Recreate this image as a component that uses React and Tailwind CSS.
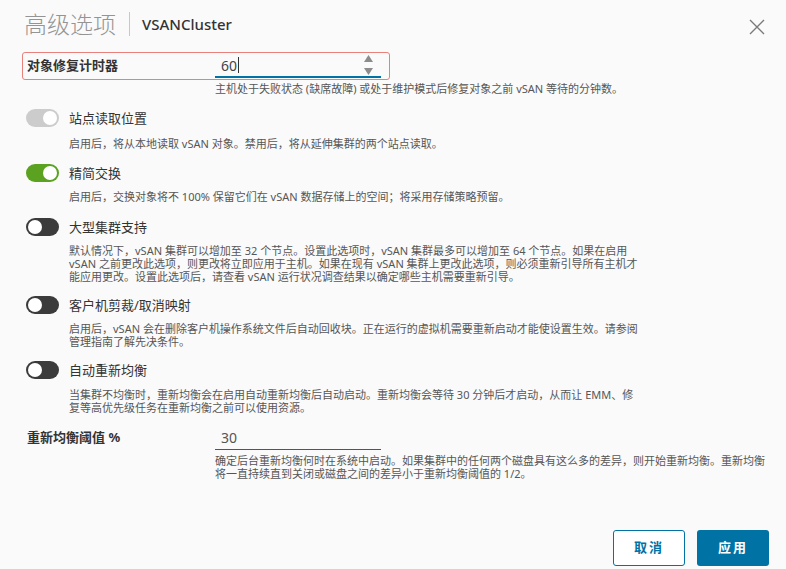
import React from "react";

const font = { fontFamily: '"Noto Sans", "Noto Sans CJK SC", sans-serif' };

function Toggle({ state }) {
  // state: "on" | "off" | "disabled"
  if (state === "on") {
    return (
      <div className="relative h-[18px] w-[33px] shrink-0 rounded-full bg-[#5aa220]">
        <div className="absolute right-[2px] top-[2px] h-[14px] w-[14px] rounded-full bg-white" />
      </div>
    );
  }
  if (state === "disabled") {
    return (
      <div className="relative h-[18px] w-[33px] shrink-0 rounded-full bg-[#cccccc]">
        <div className="absolute right-[2px] top-[2px] h-[14px] w-[14px] rounded-full bg-white" />
      </div>
    );
  }
  return (
    <div className="relative h-[18px] w-[33px] shrink-0 rounded-full bg-[#3b3b3b]">
      <div className="absolute left-[2px] top-[2px] h-[14px] w-[14px] rounded-full bg-white" />
    </div>
  );
}

function Row({ state, label, lines, rowTop, descTop }) {
  return (
    <div style={{ marginTop: rowTop }}>
      <div className="flex h-[18px] items-center pl-[26px]">
        <Toggle state={state} />
        <span className="ml-[10px] text-[13px] leading-[18px] text-[#333]">{label}</span>
      </div>
      <div
        className="pl-[69px] text-[11px] leading-[13px] text-[#565656]"
        style={{ marginTop: descTop }}
      >
        {lines.map((l, i) => (
          <div key={i} className="whitespace-nowrap">
            {l}
          </div>
        ))}
      </div>
    </div>
  );
}

export default function App() {
  return (
    <div className="h-[569px] w-[786px] overflow-hidden bg-[#fafafa]" style={font}>
      {/* header */}
      <div className="flex h-[48px] items-center pl-[24px] pr-[20px]">
        <span className="text-[23px] font-light leading-none text-[#949494]">高级选项</span>
        <div className="ml-[13px] h-[24px] w-px bg-[#c8c8c8]" />
        <span className="ml-[12px] text-[15px] font-medium text-[#333]">VSANCluster</span>
        <button className="ml-auto mt-[6px] flex h-[18px] w-[18px] items-center justify-center">
          <svg width="16" height="16" viewBox="0 0 16 16">
            <path d="M1 1 L15 15 M15 1 L1 15" stroke="#7a7a7a" strokeWidth="1.4" fill="none" />
          </svg>
        </button>
      </div>

      {/* repair timer */}
      <div className="ml-[22px] mt-[4px] flex h-[28px] w-[368px] items-center rounded-[3px] border border-[#e8807c]">
        <span className="ml-[4px] w-[188px] text-[13px] font-bold text-[#333]">对象修复计时器</span>
        <div className="relative flex h-[24px] w-[166px] items-center border-b-2 border-[#0072a3] pl-[6px]">
          <span className="text-[14px] text-[#444]">60</span>
          <span className="ml-px h-[16px] w-px bg-[#333]" />
          <div className="absolute right-[8px] top-[1px] flex flex-col items-center gap-[6px]">
            <svg width="9" height="7" viewBox="0 0 9 7">
              <path d="M4.5 0 L9 7 L0 7 Z" fill="#8c8c8c" />
            </svg>
            <svg width="9" height="7" viewBox="0 0 9 7">
              <path d="M0 0 L9 0 L4.5 7 Z" fill="#8c8c8c" />
            </svg>
          </div>
        </div>
      </div>
      <div className="ml-[215px] mt-[2px] whitespace-nowrap text-[11px] leading-[13px] text-[#565656]">
        主机处于失败状态 (缺席故障) 或处于维护模式后修复对象之前 vSAN 等待的分钟数。
      </div>

      <Row
        state="disabled"
        label="站点读取位置"
        rowTop={14}
        descTop={10}
        lines={["启用后，将从本地读取 vSAN 对象。禁用后，将从延伸集群的两个站点读取。"]}
      />
      <Row
        state="on"
        label="精简交换"
        rowTop={14}
        descTop={8}
        lines={["启用后，交换对象将不 100% 保留它们在 vSAN 数据存储上的空间；将采用存储策略预留。"]}
      />
      <Row
        state="off"
        label="大型集群支持"
        rowTop={15}
        descTop={8}
        lines={[
          "默认情况下，vSAN 集群可以增加至 32 个节点。设置此选项时，vSAN 集群最多可以增加至 64 个节点。如果在启用",
          "vSAN 之前更改此选项，则更改将立即应用于主机。如果在现有 vSAN 集群上更改此选项，则必须重新引导所有主机才",
          "能应用更改。设置此选项后，请查看 vSAN 运行状况调查结果以确定哪些主机需要重新引导。",
        ]}
      />
      <Row
        state="off"
        label="客户机剪裁/取消映射"
        rowTop={13}
        descTop={8}
        lines={[
          "启用后，vSAN 会在删除客户机操作系统文件后自动回收块。正在运行的虚拟机需要重新启动才能使设置生效。请参阅",
          "管理指南了解先决条件。",
        ]}
      />
      <Row
        state="off"
        label="自动重新均衡"
        rowTop={13}
        descTop={9}
        lines={[
          "当集群不均衡时，重新均衡会在启用自动重新均衡后自动启动。重新均衡会等待 30 分钟后才启动，从而让 EMM、修",
          "复等高优先级任务在重新均衡之前可以使用资源。",
        ]}
      />

      {/* rebalance threshold */}
      <div className="mt-[12px] flex items-start">
        <span className="ml-[27px] w-[188px] text-[13px] font-bold leading-[22px] text-[#333]">重新均衡阈值 %</span>
        <div className="flex h-[24px] w-[166px] items-center border-b border-[#555] pl-[6px]">
          <span className="text-[14px] text-[#555]">30</span>
        </div>
      </div>
      <div className="ml-[215px] mt-[4px] whitespace-nowrap text-[11px] leading-[13px] text-[#565656]">
        <div>确定后台重新均衡何时在系统中启动。如果集群中的任何两个磁盘具有这么多的差异，则开始重新均衡。重新均衡</div>
        <div>将一直持续直到关闭或磁盘之间的差异小于重新均衡阈值的 1/2。</div>
      </div>

      {/* footer buttons */}
      <div className="mt-[50px] flex justify-end gap-[12px] pr-[17px]">
        <button className="h-[36px] w-[72px] rounded-[3px] border border-[#0072a3] bg-white text-[13px] font-bold tracking-[2px] text-[#0072a3]">
          取消
        </button>
        <button className="h-[36px] w-[72px] rounded-[3px] bg-[#0072a3] text-[13px] font-bold tracking-[2px] text-white">
          应用
        </button>
      </div>
    </div>
  );
}
